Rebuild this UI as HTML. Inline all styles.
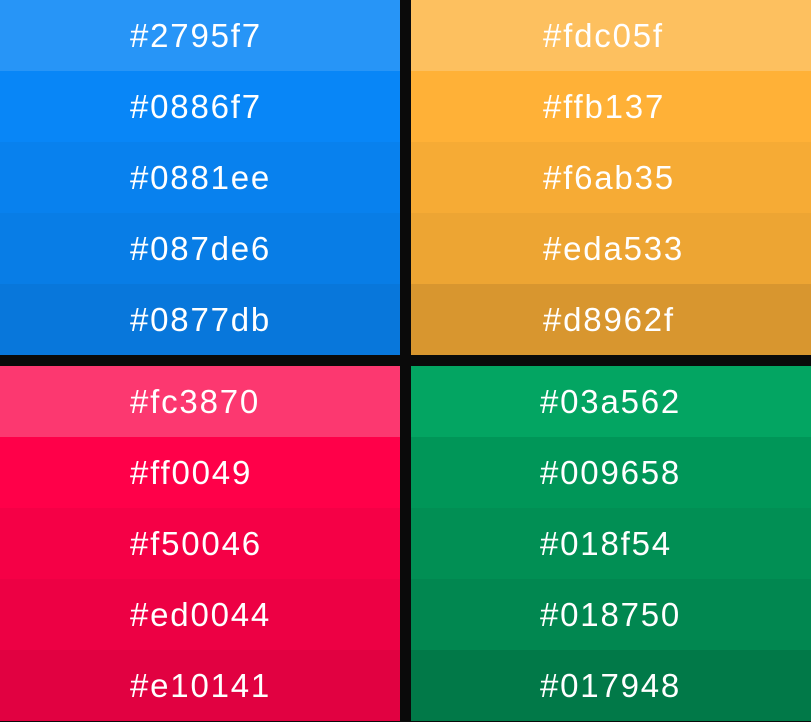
<!DOCTYPE html>
<html><head><meta charset="utf-8"><style>
*{margin:0;padding:0;box-sizing:border-box}
body{width:811px;height:721px;background:#0a0a0a;position:relative;overflow:hidden;font-family:"Liberation Sans",sans-serif}
.col{position:absolute;width:400px}
.r{height:71px;color:#fff;font-size:33px;letter-spacing:1.8px;line-height:72px;padding-left:130px;white-space:nowrap}
</style></head><body>
<div class="col" style="left:0;top:0">
<div class="r" style="background:#2795f7">#2795f7</div>
<div class="r" style="background:#0886f7">#0886f7</div>
<div class="r" style="background:#0881ee">#0881ee</div>
<div class="r" style="background:#087de6">#087de6</div>
<div class="r" style="background:#0877db">#0877db</div>
</div>
<div class="col" style="left:411px;top:0">
<div class="r" style="background:#fdc05f;padding-left:132px">#fdc05f</div>
<div class="r" style="background:#ffb137;padding-left:132px">#ffb137</div>
<div class="r" style="background:#f6ab35;padding-left:132px">#f6ab35</div>
<div class="r" style="background:#eda533;padding-left:132px">#eda533</div>
<div class="r" style="background:#d8962f;padding-left:132px">#d8962f</div>
</div>
<div class="col" style="left:0;top:366px">
<div class="r" style="background:#fc3870">#fc3870</div>
<div class="r" style="background:#ff0049">#ff0049</div>
<div class="r" style="background:#f50046">#f50046</div>
<div class="r" style="background:#ed0044">#ed0044</div>
<div class="r" style="background:#e10141">#e10141</div>
</div>
<div class="col" style="left:411px;top:366px">
<div class="r" style="background:#03a562;padding-left:129px">#03a562</div>
<div class="r" style="background:#009658;padding-left:129px">#009658</div>
<div class="r" style="background:#018f54;padding-left:129px">#018f54</div>
<div class="r" style="background:#018750;padding-left:129px">#018750</div>
<div class="r" style="background:#017948;padding-left:129px">#017948</div>
</div>
</body></html>
